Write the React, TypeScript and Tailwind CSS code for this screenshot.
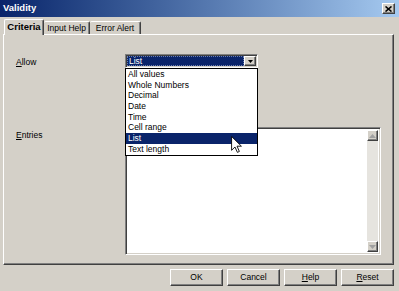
import React from 'react';

const OPTIONS = ['All values', 'Whole Numbers', 'Decimal', 'Date', 'Time', 'Cell range', 'List', 'Text length'];

// classic raised 3D edge
const raised =
  'border border-t-white border-l-white border-r-[#404040] border-b-[#404040] shadow-[inset_-1px_-1px_0_#808080]';
// classic sunken 3D edge
const sunken =
  'border border-t-[#808080] border-l-[#808080] border-r-white border-b-white shadow-[inset_1px_1px_0_#404040,inset_-1px_-1px_0_#d4d0c8]';

const Accel: React.FC<{ k: string; rest: string }> = ({ k, rest }) => (
  <span>
    <span className="underline underline-offset-1">{k}</span>
    {rest}
  </span>
);

const Button: React.FC<{ children: React.ReactNode }> = ({ children }) => (
  <button className={`w-[53px] h-[17px] bg-[#d4d0c8] ${raised} flex items-center justify-center leading-none`}>
    {children}
  </button>
);

const ScrollArrow: React.FC<{ up?: boolean }> = ({ up }) => (
  <div className={`w-[11px] h-[11px] bg-[#d4d0c8] ${raised} flex items-center justify-center`}>
    <svg width="7" height="4" viewBox="0 0 7 4">
      {up ? (
        <path d="M3.5 0 L7 4 L0 4 Z" fill="#a0a0a0" />
      ) : (
        <path d="M0 0 L7 0 L3.5 4 Z" fill="#a0a0a0" />
      )}
    </svg>
  </div>
);

export default function App() {
  return (
    <div className="relative w-[399px] h-[291px] overflow-hidden bg-[#d4d0c8] text-black text-[8.5px] font-['Liberation_Sans',Arial,sans-serif]">
      {/* Title bar */}
      <div className="h-[17px] bg-gradient-to-r from-[#0a246a] to-[#a6caf0] flex items-center justify-between pl-[3px] pr-[4px]">
        <span className="text-white font-bold text-[9.5px]">Validity</span>
        <div className={`w-[13px] h-[11px] bg-[#d4d0c8] ${raised} flex items-center justify-center`}>
          <svg width="7" height="6" viewBox="0 0 7 6">
            <path d="M0.5 0.5 L6.5 5.5 M6.5 0.5 L0.5 5.5" stroke="black" strokeWidth="1.6" />
          </svg>
        </div>
      </div>

      {/* Tabs */}
      <div className="mt-[2px] h-[15px] pl-[4px] flex items-end">
        <div className="relative z-10 -mb-[1px] w-[40px] h-[16px] bg-[#d4d0c8] border-l border-t border-l-white border-t-white border-r border-r-[#404040] shadow-[inset_-1px_0_0_#808080] rounded-t-[2px] flex items-center justify-center font-bold text-[9.5px]">
          Criteria
        </div>
        <div className="w-[46px] h-[13px] border-t border-t-white border-r border-r-[#404040] shadow-[inset_-1px_0_0_#808080] rounded-t-[2px] flex items-center justify-center">
          Input Help
        </div>
        <div className="w-[51px] h-[13px] border-t border-t-white border-r border-r-[#404040] shadow-[inset_-1px_0_0_#808080] rounded-t-[2px] flex items-center justify-center">
          Error Alert
        </div>
      </div>

      {/* Tab panel */}
      <div className={`ml-[3px] w-[391px] h-[231px] ${raised} pt-[19px] pl-[12px]`}>
        <div className="flex">
          <div className="w-[109px] pt-[3px] leading-[11px]">
            <Accel k="A" rest="llow" />
          </div>
          <div className="relative w-[133px] h-[14px]">
            <div className={`h-full bg-white ${sunken} flex p-[1px]`}>
              <div className="flex-1 bg-[#0a246a] text-white outline outline-1 outline-dotted outline-[#6a7eb0] -outline-offset-1 pl-[2px] leading-[10px]">
                List
              </div>
              <div className={`w-[12px] bg-[#d4d0c8] ${raised} flex items-center justify-center`}>
                <svg width="5" height="3" viewBox="0 0 5 3">
                  <path d="M0 0 L5 0 L2.5 3 Z" fill="black" />
                </svg>
              </div>
            </div>
            <div className="absolute left-0 top-[14px] z-20 w-[133px] border border-black bg-white">
              {OPTIONS.map((o) => (
                <div
                  key={o}
                  className={`h-[10.7px] leading-[10.7px] pl-[2px] ${o === 'List' ? 'bg-[#0a246a] text-white' : ''}`}
                >
                  {o}
                </div>
              ))}
            </div>
          </div>
        </div>

        <div className="mt-[59px] flex">
          <div className="w-[109px] pt-[3px] leading-[11px]">
            <Accel k="E" rest="ntries" />
          </div>
          <div className={`w-[256px] h-[128px] bg-white ${sunken} p-[2px] flex justify-end`}>
            <div className="w-[11px] h-full bg-[#e6e4df] flex flex-col justify-between">
              <ScrollArrow up />
              <ScrollArrow />
            </div>
          </div>
        </div>
      </div>

      {/* Buttons */}
      <div className="mt-[4px] pr-[5px] flex justify-end gap-[4px]">
        <Button>OK</Button>
        <Button>Cancel</Button>
        <Button>
          <Accel k="H" rest="elp" />
        </Button>
        <Button>
          <Accel k="R" rest="eset" />
        </Button>
      </div>

      {/* Mouse pointer */}
      <svg className="absolute left-[231px] top-[136px] z-30" width="11" height="17" viewBox="0 0 12 19">
        <path d="M0.5 0.5 L0.5 16 L4.3 12.3 L7 18.3 L9.2 17.3 L6.6 11.4 L11.5 11.4 Z" fill="white" stroke="black" strokeWidth="1" />
      </svg>
    </div>
  );
}
